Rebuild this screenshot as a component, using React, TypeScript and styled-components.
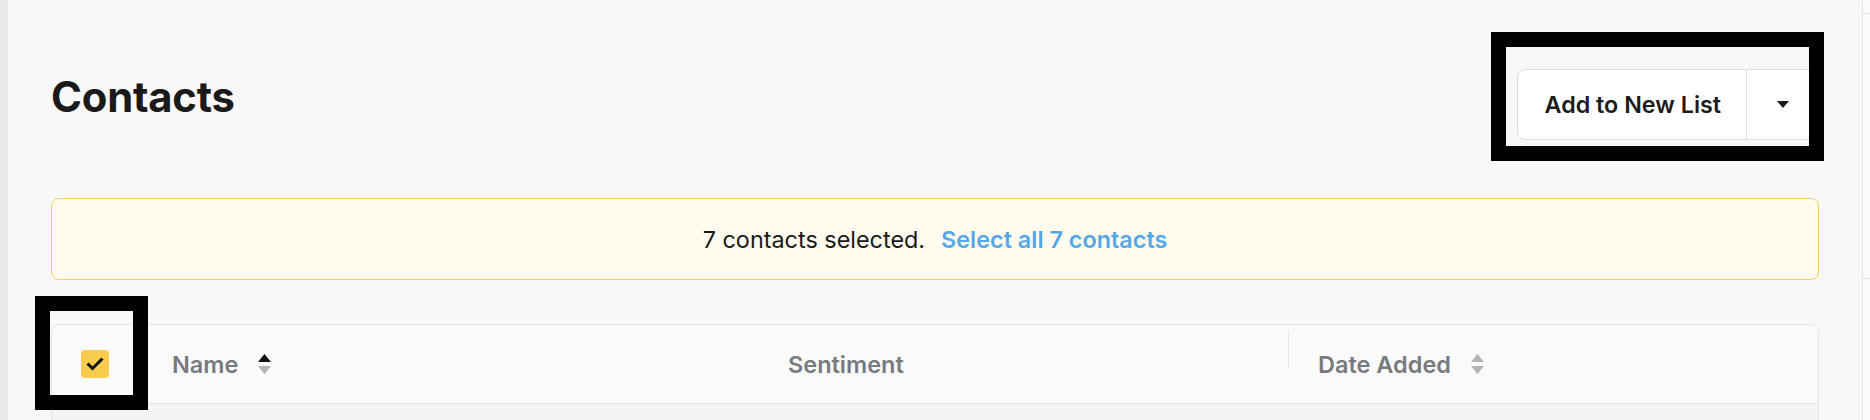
import React from 'react';

import styled, {createGlobalStyle} from 'styled-components';

const GlobalStyle = createGlobalStyle`
  html, body {
    margin: 0;
    padding: 0;
    background: #f8f8f8;
  }
  body {
    font-family: Inter, 'Noto Sans', 'Liberation Sans', sans-serif;
    -webkit-font-smoothing: antialiased;
  }
`;

const Shell = styled.div`
  position: relative;
  display: flex;
  width: 1870px;
  height: 420px;
  overflow: hidden;
  background: #f8f8f8;
`;

const LeftRail = styled.div`
  width: 8px;
  flex-shrink: 0;
  background: #e8e8e8;
`;

const SidePanel = styled.div`
  width: 7px;
  flex-shrink: 0;
  border-left: 1px solid #e4e4e4;
  background: #fbfbfb;
  display: flex;
  flex-direction: column;
`;

const SideLine = styled.div<{top: number}>`
  margin-top: ${(props) => props.top}px;
  border-top: 1px solid #e6e6e6;
`;

const Main = styled.main`
  flex: 1;
  display: flex;
  flex-direction: column;
  padding: 69px 43px 0 43px;
`;

const PageHeader = styled.div`
  display: flex;
  justify-content: space-between;
  align-items: flex-start;
`;

const Title = styled.h1`
  margin: 4px 0 0 0;
  font-size: 41.8px;
  line-height: 48px;
  font-weight: 700;
  color: #1a1a1a;
  letter-spacing: -0.2px;
`;

const SplitButton = styled.div`
  display: flex;
  height: 71px;
  box-sizing: border-box;
  background: #ffffff;
  border: 1px solid #dddddd;
  border-radius: 8px;
`;

const ButtonMain = styled.button`
  display: flex;
  align-items: center;
  padding: 0 25px 0 27px;
  border: none;
  background: transparent;
  font-family: inherit;
  font-size: 23.3px;
  font-weight: 600;
  color: #1c1c1c;
  border-right: 1px solid #dddddd;
`;

const ButtonCaret = styled.button`
  width: 71px;
  display: flex;
  align-items: center;
  justify-content: center;
  border: none;
  background: transparent;
  padding: 0;
`;

const Banner = styled.div`
  margin-top: 58px;
  height: 82px;
  box-sizing: border-box;
  display: flex;
  align-items: center;
  justify-content: center;
  gap: 16px;
  background: #fffcef;
  border: 1px solid #f7cf5c;
  border-radius: 8px;
  font-size: 23.4px;
`;

const BannerText = styled.span`
  color: #1a1a1a;
`;

const BannerLink = styled.a`
  color: #56a8e4;
  font-weight: 600;
  cursor: pointer;
`;

const Table = styled.div`
  margin-top: 44px;
  flex: 1;
  border: 1px solid #e6e6e6;
  border-bottom: none;
  border-radius: 8px 8px 0 0;
  background: #f4f4f4;
  overflow: hidden;
`;

const HeaderRow = styled.div`
  display: grid;
  grid-template-columns: 120px 616px 500px 1fr;
  align-items: center;
  height: 78px;
  background: #fafafa;
  border-bottom: 1px solid #e6e6e6;
`;

const CheckCell = styled.div`
  padding-left: 29px;
`;

const Checkbox = styled.div`
  width: 28px;
  height: 28px;
  border-radius: 4px;
  background: #f7cc4f;
  display: flex;
  align-items: center;
  justify-content: center;
`;

const HeaderCell = styled.div<{divided?: boolean}>`
  position: relative;
  display: flex;
  align-items: center;
  gap: 20px;
  padding-left: ${(props) => (props.divided ? 30 : 0)}px;
  font-size: 23.5px;
  font-weight: 600;
  color: #777b7f;

  ${(props) =>
    props.divided &&
    `
    &::before {
      content: '';
      position: absolute;
      left: 0;
      top: -19px;
      height: 37px;
      border-left: 1px solid #e8e8e8;
    }
  `}
`;

const Frame = styled.div<{x: number; y: number; w: number; h: number}>`
  position: absolute;
  left: ${(props) => props.x}px;
  top: ${(props) => props.y}px;
  width: ${(props) => props.w}px;
  height: ${(props) => props.h}px;
  box-sizing: border-box;
  border: 15px solid #000000;
  pointer-events: none;
`;

const SortIcon = ({active}: {active?: boolean}) => (
  <svg width="13" height="20" viewBox="0 0 13 20">
    <polygon points="0,8 6.5,0 13,8" fill={active ? '#111111' : '#b3b3b3'} />
    <polygon points="0,12 6.5,20 13,12" fill="#b3b3b3" />
  </svg>
);

const CaretDown = () => (
  <svg width="12" height="7" viewBox="0 0 12 7">
    <polygon points="0,0 12,0 6,7" fill="#1c1c1c" />
  </svg>
);

const CheckMark = () => (
  <svg width="18" height="14" viewBox="0 0 18 14">
    <polyline points="1.5,6.5 6.5,11.5 16.5,1.5" fill="none" stroke="#111111" strokeWidth="3" />
  </svg>
);

const App = (): JSX.Element => {
  return (
    <>
      <GlobalStyle />
      <Shell>
        <LeftRail />
        <Main>
          <PageHeader>
            <Title>Contacts</Title>
            <SplitButton>
              <ButtonMain>Add to New List</ButtonMain>
              <ButtonCaret>
                <CaretDown />
              </ButtonCaret>
            </SplitButton>
          </PageHeader>
          <Banner>
            <BannerText>7 contacts selected.</BannerText>
            <BannerLink>Select all 7 contacts</BannerLink>
          </Banner>
          <Table>
            <HeaderRow>
              <CheckCell>
                <Checkbox>
                  <CheckMark />
                </Checkbox>
              </CheckCell>
              <HeaderCell>
                Name
                <SortIcon active />
              </HeaderCell>
              <HeaderCell>Sentiment</HeaderCell>
              <HeaderCell divided>
                Date Added
                <SortIcon />
              </HeaderCell>
            </HeaderRow>
          </Table>
        </Main>
        <SidePanel>
          <SideLine top={13} />
          <SideLine top={264} />
        </SidePanel>
        <Frame x={1491} y={32} w={333} h={129} />
        <Frame x={35} y={296} w={113} h={114} />
      </Shell>
    </>
  );
};

export default App;
